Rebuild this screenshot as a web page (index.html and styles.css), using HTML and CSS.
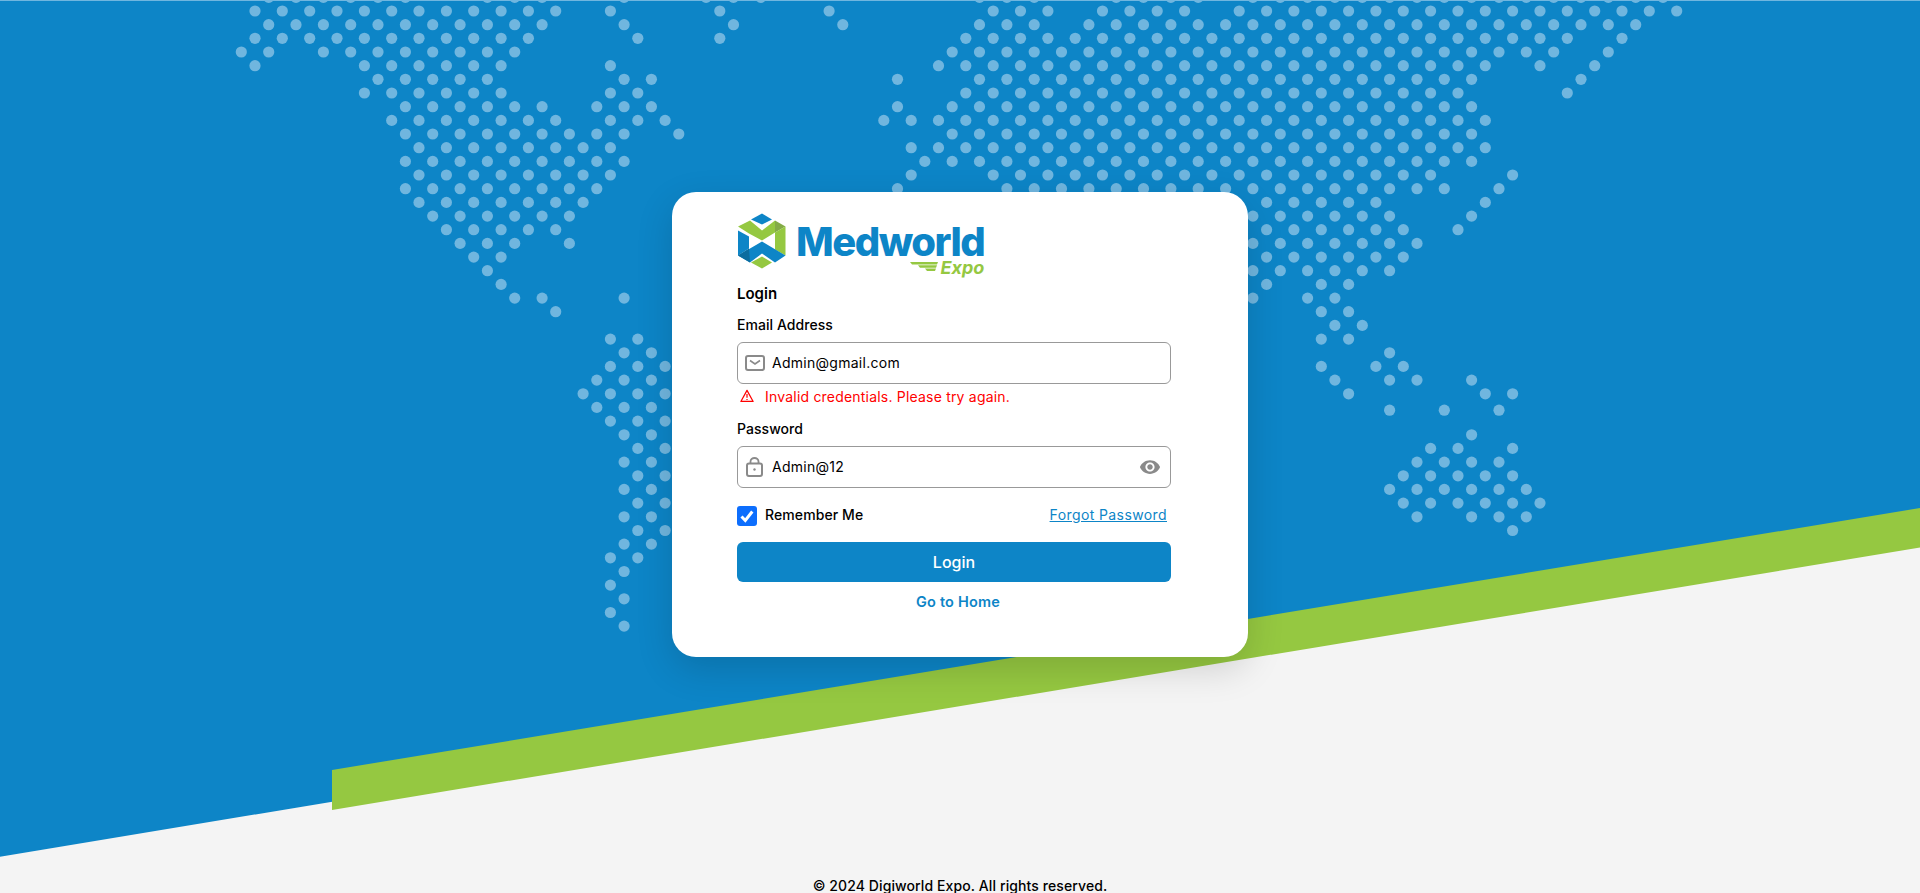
FILE: index.html
```html
<!DOCTYPE html>
<html lang="en">
<head>
  <meta charset="UTF-8" />
  <meta name="viewport" content="width=device-width, initial-scale=1.0" />
  <title>Login - Medworld Expo</title>
  <link rel="stylesheet" href="styles.css">
</head>
<body>

  <svg class="backdrop" viewBox="0 0 1920 893" aria-hidden="true">
    <rect class="bg-blue" width="1920" height="893" />
    <polygon class="bg-grey" points="0,856.7 1920,539 1920,893 0,893" />
    <polygon class="bg-green" points="332,770 1920,508 1920,547.5 332,810" />
    <g id="mapDots" class="map-dots"></g>
    <rect class="top-line" width="1920" height="1" />
  </svg>

  <main class="page">
    <div class="card">
      <div class="logo">
        <svg class="logo-mark" viewBox="0 0 48 55" width="48" height="56">
          <polygon fill="#0d85c7" points="13,6 24,0 34,6 24,11" />
          <polygon fill="#95c841" points="0,13 12,7 24,17 37,7 37,19 24,27 11,20" />
          <polygon fill="#84ab47" points="37,7 47.5,13 37,19" />
          <polygon fill="#95c841" points="37,19 47.5,13 47.5,42 37,36" />
          <polygon fill="#0d85c7" points="0,17 11,23 11,35 0,42" />
          <polygon fill="#0d85c7" points="0,42 24,28 47.5,42 37,49 24,40 12,49" />
          <polygon fill="#0b6c9f" points="0,42 11,35 12,49" />
          <polygon fill="#95c841" points="13,49 24,43 34,49 24,55" />
        </svg>
        <div class="logo-text">
          <span class="logo-name">Medworld</span>
          <span class="logo-sub">
            <svg viewBox="0 0 28 9" width="28" height="9">
              <polygon fill="#95c841" points="0,0 28,0 27,2.4 2,2.4" />
              <polygon fill="#95c841" points="8,3.3 27,3.3 26,5.7 10,5.7" />
              <polygon fill="#95c841" points="15,6.6 26,6.6 25,9 17,9" />
            </svg>
            <span class="logo-expo">Expo</span>
          </span>
        </div>
      </div>

      <h1 class="title">Login</h1>

      <label class="field-label" for="email">Email Address</label>
      <div class="field">
        <svg class="field-icon" viewBox="0 0 20 16" width="20" height="16">
          <rect x="1" y="1" width="18" height="14" rx="2" fill="none" stroke="#8a8a8a" stroke-width="2" />
          <path d="M5 5.5l5 3.5 5-3.5" fill="none" stroke="#8a8a8a" stroke-width="1.6" />
        </svg>
        <input class="field-input" type="text" id="email" value="Admin@gmail.com" />
      </div>
      <div class="error">
        <svg viewBox="0 0 16 16" width="14" height="14">
          <path d="M8 1.6L15 14.2H1z" fill="none" stroke="#f00" stroke-width="1.4" stroke-linejoin="round" />
          <path d="M8 5.8v4.2M8 11.4v1.2" stroke="#f00" stroke-width="1.4" />
        </svg>
        <span>Invalid credentials. Please try again.</span>
      </div>

      <label class="field-label field-label-pass" for="password">Password</label>
      <div class="field">
        <svg class="field-icon" viewBox="0 0 20 20" width="20" height="20">
          <rect x="2" y="6.5" width="15" height="12.5" rx="2" fill="none" stroke="#8a8a8a" stroke-width="2" />
          <path d="M5.5 6.5V4.5a4 3.5 0 0 1 8 0v2" fill="none" stroke="#8a8a8a" stroke-width="1.8" />
          <circle cx="9.5" cy="12.5" r="1.2" fill="#8a8a8a" />
        </svg>
        <input class="field-input" type="text" id="password" value="Admin@12" />
        <svg class="eye" viewBox="0 0 24 24" width="22" height="22">
          <path fill="#8a8a8a" d="M12 4.5C7 4.5 2.73 7.61 1 12c1.73 4.39 6 7.5 11 7.5s9.27-3.11 11-7.5c-1.73-4.39-6-7.5-11-7.5zM12 17c-2.76 0-5-2.24-5-5s2.24-5 5-5 5 2.24 5 5-2.24 5-5 5zm0-8c-1.66 0-3 1.34-3 3s1.34 3 3 3 3-1.34 3-3-1.34-3-3-3z" />
        </svg>
      </div>

      <div class="options">
        <label class="remember">
          <span class="check">
            <svg viewBox="0 0 20 20" width="20" height="20">
              <path d="M4.5 10.5l3.8 4 7-9" fill="none" stroke="#fff" stroke-width="3" />
            </svg>
          </span>
          <span class="remember-text">Remember Me</span>
        </label>
        <a class="forgot" href="#">Forgot Password</a>
      </div>

      <button class="login-btn">Login</button>
      <a class="home-link" href="#">Go to Home</a>
    </div>
  </main>

  <footer class="footer">© 2024 Digiworld Expo. All rights reserved.</footer>

  <script src="script.js"></script>
</body>
</html>
```

FILE: styles.css
```css
html, body {
  height: 100%;
}
body {
  margin: 0;
  font-family: 'Inter', 'Liberation Sans', sans-serif;
  background: #f4f4f4;
  color: #000;
  display: flex;
  flex-direction: column;
  height: 893px;
  overflow: hidden;
  position: relative;
}
.backdrop {
  position: absolute;
  top: 0;
  left: 0;
  width: 1920px;
  height: 893px;
}
.bg-blue {
  fill: #0d85c7;
}
.bg-grey {
  fill: #f4f4f4;
}
.bg-green {
  fill: #95c841;
}
.map-dots {
  fill: #70b6df;
}
.top-line {
  fill: #70b6df;
}
.page {
  position: relative;
  flex: 1;
  display: flex;
  justify-content: center;
  align-items: flex-start;
  padding-top: 192px;
}
.card {
  width: 576px;
  height: 465px;
  box-sizing: border-box;
  padding: 21px 77px 0 65px;
  background: #fff;
  border-radius: 24px;
  box-shadow: 0 12px 36px rgba(0, 0, 0, 0.15);
}

/* logo */
.logo {
  display: flex;
  align-items: flex-start;
  height: 64px;
  width: 247px;
}
.logo-mark {
  flex: none;
  margin-left: 1px;
}
.logo-text {
  display: flex;
  flex-direction: column;
  align-items: flex-end;
  margin-left: 10px;
  margin-top: 13px;
}
.logo-name {
  font-size: 40px;
  line-height: 32px;
  font-weight: 800;
  letter-spacing: -1.5px;
  color: #0d85c7;
}
.logo-sub {
  display: flex;
  align-items: flex-start;
  gap: 2px;
  margin-top: 1px;
}
.logo-sub svg {
  margin-top: 3px;
}
.logo-expo {
  font-size: 18px;
  line-height: 18px;
  font-weight: 700;
  font-style: italic;
  color: #95c841;
}

/* form */
.title {
  margin: 7px 0 0;
  font-size: 15px;
  line-height: 20px;
  font-weight: 600;
}
.field-label {
  display: block;
  margin-top: 11px;
  font-size: 14px;
  line-height: 20px;
  font-weight: 500;
  letter-spacing: 0.05px;
}
.field-label-pass {
  margin-top: 14px;
}
.field {
  display: flex;
  align-items: center;
  height: 42px;
  margin-top: 7px;
  padding: 0 9px 0 7px;
  box-sizing: border-box;
  border: 1px solid #999;
  border-radius: 6px;
  background: #fff;
}
.field-icon {
  flex: none;
}
.field-input {
  flex: 1;
  min-width: 0;
  margin-left: 7px;
  padding: 0 0 1px;
  border: none;
  outline: none;
  background: none;
  font-family: inherit;
  font-size: 14px;
  letter-spacing: 0.27px;
  color: #000;
}
.eye {
  flex: none;
}
.error {
  display: flex;
  align-items: center;
  gap: 11px;
  height: 18px;
  margin-top: 3px;
  padding-left: 3px;
  font-size: 14px;
  letter-spacing: 0.2px;
  color: #f00;
}
.options {
  display: flex;
  align-items: center;
  justify-content: space-between;
  height: 20px;
  margin-top: 18px;
  padding-right: 4px;
  font-size: 14px;
}
.remember {
  display: flex;
  align-items: center;
  gap: 8px;
  font-weight: 500;
  letter-spacing: 0.1px;
}
.remember-text {
  margin-top: -3px;
}
.check {
  display: block;
  width: 20px;
  height: 20px;
  border-radius: 3px;
  background: #0d6efd;
}
.forgot {
  margin-top: -3px;
  color: #0d85c7;
  letter-spacing: 0.4px;
}
.login-btn {
  display: block;
  width: 100%;
  height: 40px;
  margin-top: 16px;
  border: none;
  border-radius: 6px;
  background: #0d85c7;
  color: #fff;
  font-family: inherit;
  font-size: 16px;
  font-weight: 500;
}
.home-link {
  display: block;
  margin-top: 10px;
  padding-left: 8px;
  text-align: center;
  font-size: 14.5px;
  line-height: 20px;
  font-weight: 600;
  letter-spacing: 0.2px;
  color: #0d85c7;
  text-decoration: none;
}
.footer {
  position: relative;
  margin-bottom: -2px;
  text-align: center;
  font-size: 14px;
  line-height: 18px;
  font-weight: 500;
  letter-spacing: 0.1px;
}
```

FILE: script.js
```js
// dot map: row number -> columns, "a-b" means every second column from a to b
const ROWS = {
  0: '1-11 17-21 27 33-37 53-57 63-69 73-103',
  1: '0-22 26 34 42 54-58 62-68 72-104',
  2: '1-21 27 35 43 53-57 61-101',
  3: '0-20 28 34 52-96 100',
  4: '-1 1 5-19 51-95 99',
  5: '0 8-18 26 50-90 94 98',
  6: '9-17 27 29 47 53-89 97',
  7: '8-18 26 28 52-88 96',
  8: '11-21 25-29 47 51-89',
  9: '10-22 26-30 46 48 50-90',
  10: '11-27 31 51-89',
  11: '12-26 48 50-90',
  12: '11-27 49-89',
  13: '12-26 48 54-86 92',
  14: '11-25 47 55-87 91',
  15: '12-24 74-82 90',
  16: '13-23 73-83 89',
  17: '14-22 74-84 88',
  18: '15-19 23 73-85',
  19: '16 18 74-84',
  20: '17 73-83',
  21: '18 74 78 80',
  22: '19 21 27 73 77 79',
  23: '22 78 80',
  24: '79 81',
  25: '26 28 78 80',
  26: '27 29 83',
  27: '26-30 78 82 84',
  28: '25-29 79 83 85 89',
  29: '24-30 80 90 92',
  30: '25-29',
  30.2: '83 87 91',
  31: '26-30',
  32: '27 29 89',
  33: '28 30 86 88 92',
  34: '27 29 85-91',
  35: '28 30 84-92',
  36: '27 29 83-93',
  37: '28 30 84-94',
  38: '27 29 85 89-93',
  39: '28 30 92',
  40: '27 29',
  41: '26 28',
  42: '27',
  43: '26',
  44: '27',
  45: '26',
  46: '27'
};

const STEP = 13.67;
const group = document.getElementById('mapDots');

function addDot(col, row) {
  const dot = document.createElementNS('http://www.w3.org/2000/svg', 'circle');
  dot.setAttribute('cx', (255 + col * STEP).toFixed(1));
  dot.setAttribute('cy', (11 + (row - 1) * STEP).toFixed(1));
  dot.setAttribute('r', '5.6');
  group.appendChild(dot);
}

Object.keys(ROWS).forEach(row => {
  ROWS[row].split(' ').forEach(part => {
    const m = part.match(/^(-?\d+)(?:-(\d+))?$/);
    const from = parseInt(m[1]);
    const to = m[2] ? parseInt(m[2]) : from;
    for (let col = from; col <= to; col += 2) {
      addDot(col, parseFloat(row));
    }
  });
});
```
